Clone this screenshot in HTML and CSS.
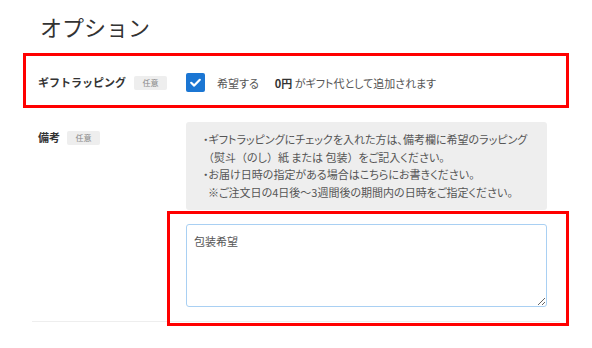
FILE: index.html
```html
<!DOCTYPE HTML>
<html>
<head>
<meta charset="utf-8">
<title>オプション</title>
<link rel="stylesheet" href="styles.css">
</head>
<body>

<div id="options">
<h1 class="options_title">オプション</h1>

<div class="option_row option_gift">
	<div class="option_label">ギフトラッピング<span class="option_badge">任意</span></div>
	<div class="option_body gift_body">
		<span class="checkbox">
			<svg width="19" height="19" viewBox="0 0 19 19"><path d="M5.2 9.8 L8.2 12.6 L13.8 6.8" fill="none" stroke="#ffffff" stroke-width="2.2" stroke-linecap="round" stroke-linejoin="round"/></svg>
		</span>
		<span class="gift_text">希望する</span>
		<span class="gift_price"><b>0円</b> がギフト代として追加されます</span>
	</div>
	<div class="mark mark_gift"></div>
</div>

<div class="option_row option_note">
	<div class="option_label note_label">備考<span class="option_badge">任意</span></div>
	<div class="option_body">
		<div class="note_info">
			・ギフトラッピングにチェックを入れた方は、備考欄に希望のラッピング<br>
			<span class="wide">（</span>熨斗<span class="wide">（</span>のし<span class="wide">）</span>紙 または 包装<span class="wide">）</span>をご記入ください。<br>
			・お届け日時の指定がある場合はこちらにお書きください。<br>
			&nbsp;&nbsp;※ご注文日の4日後～3週間後の期間内の日時をご指定ください。
		</div>
		<div class="note_field">
			<textarea class="note_input">包装希望</textarea>
		</div>
	</div>
</div>
<!-- annotation frame over the note field -->
<div class="mark mark_note"></div>
</div>

</body>
</html>
```

FILE: styles.css
```css
html {
	background-color:#ffffff;
}
body {
	margin:0;
	min-height:348px;
	font-family:"Noto Sans CJK JP", "Noto Sans", sans-serif;
	color:#555555;
}
#options {
	position:relative;
	width:528px;
	margin-left:32px;
	padding-bottom:26px;
}
.options_title {
	margin:0;
	padding:8px 0 17px 8px;
	font-size:22px;
	font-weight:normal;
	line-height:36px;
	color:#333333;
}
.option_row {
	position:relative;
	display:grid;
	grid-template-columns:148px 1fr;
	padding-left:6px;
}
.option_gift {
	padding-top:12px;
	padding-bottom:12px;
	align-items:center;
}
.option_note {
	padding-top:18px;
	padding-bottom:14px;
	border-bottom:1px solid #eeeeee;
}
.option_label {
	display:flex;
	align-items:center;
	font-size:11px;
	font-weight:bold;
	color:#333333;
	line-height:17px;
}
.note_label {
	align-self:start;
	padding-top:7px;
}
.option_badge {
	display:inline-block;
	margin-left:8px;
	width:33px;
	height:14px;
	line-height:14px;
	text-align:center;
	background-color:#eeeeee;
	border-radius:2px;
	font-size:8px;
	font-weight:normal;
	color:#888888;
}
.note_label .option_badge {
	margin-left:7px;
}
.option_body {
	font-size:11px;
	font-feature-settings:"palt";
}
.wide {
	font-feature-settings:normal;
}
.gift_body {
	display:flex;
	align-items:center;
}
.checkbox {
	display:inline-block;
	width:19px;
	height:19px;
	background-color:#1b76d3;
	border-radius:2px;
}
.checkbox svg {
	display:block;
}
.gift_text {
	margin-left:12px;
}
.gift_price {
	margin-left:16px;
}
.gift_price b {
	color:#333333;
}
.note_info {
	width:361px;
	box-sizing:border-box;
	padding:9px 17px 8px;
	background-color:#eeeeee;
	border-radius:3px;
	line-height:17.7px;
}
.note_field {
	width:361px;
	margin-top:14px;
}
.note_input {
	display:block;
	width:361px;
	height:83px;
	box-sizing:border-box;
	margin:0;
	padding:8px 7px;
	border:1px solid #a9d0f3;
	border-radius:3px;
	font-family:"Noto Sans CJK JP", "Noto Sans", sans-serif;
	font-size:11px;
	line-height:17px;
	color:#555555;
	resize:vertical;
	outline:none;
}
.mark {
	position:absolute;
	border:3px solid #ff0000;
	pointer-events:none;
}
.mark_gift {
	top:-8px;
	bottom:-4px;
	left:-9px;
	right:-9px;
}
.mark_note {
	top:211px;
	left:135px;
	width:396px;
	height:109px;
}
```
